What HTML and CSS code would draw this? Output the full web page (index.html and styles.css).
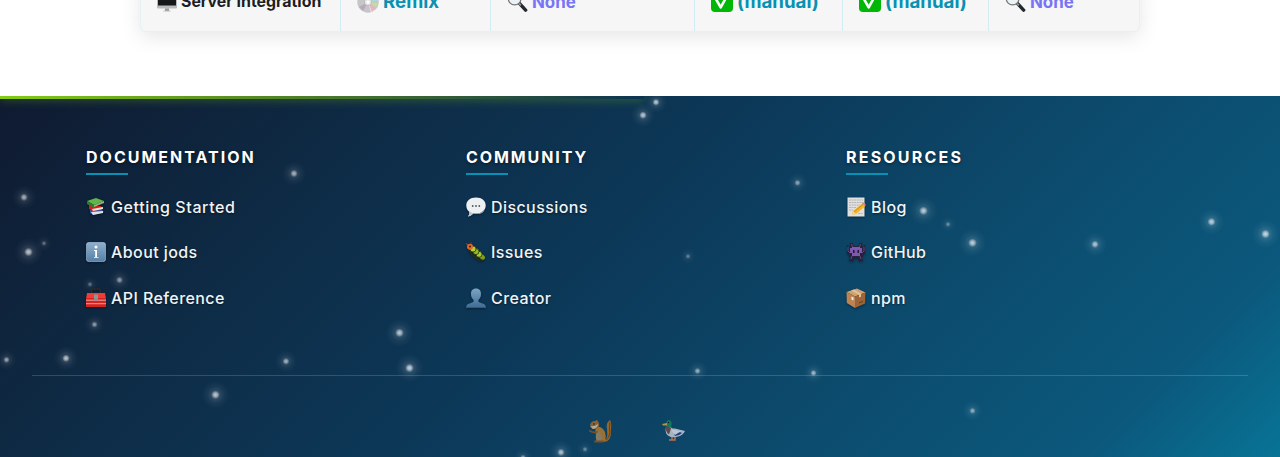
FILE: index.html
```html
<!DOCTYPE html>
<html lang="en">
<head>
<meta charset="utf-8">
<title>jods</title>
<link rel="stylesheet" href="styles.css">
</head>
<body>
<svg class="defs" width="0" height="0">
  <defs>
    <radialGradient id="glow"><stop offset="0" stop-color="#fff" stop-opacity=".95"/><stop offset=".15" stop-color="#fff" stop-opacity=".7"/><stop offset=".31" stop-color="#fff" stop-opacity=".16"/><stop offset=".6" stop-color="#fff" stop-opacity=".06"/><stop offset="1" stop-color="#fff" stop-opacity="0"/></radialGradient>
    <linearGradient id="blue" x2="0" y2="1"><stop stop-color="#8fb0cd"/><stop offset="1" stop-color="#5580a5"/></linearGradient>
    <linearGradient id="person" x2="0" y2="1"><stop stop-color="#7da4c6"/><stop offset="1" stop-color="#3f6c95"/></linearGradient>
    <symbol id="lens" viewBox="0 0 22 22"><path d="M13 12.500l6.500 7" stroke="#25282c" stroke-width="3.600" stroke-linecap="round"/><path d="M12.500 12.500l2 2" stroke="#999" stroke-width="2"/><circle cx="8" cy="7.500" r="6.600" fill="#edf3f5" stroke="#70757a" stroke-width="1.300"/></symbol>
    <symbol id="check" viewBox="0 0 22 22"><rect width="22" height="21" rx="4" fill="#00b607"/><path d="M5.500 9l4.200 7.300L16.500 4" fill="none" stroke="#fff" stroke-width="2.600" stroke-linecap="round" stroke-linejoin="round"/></symbol>
  </defs>
</svg>
<main class="main">
  <div class="row">
    <div class="cell cell-name"><svg class="icon" viewBox="0 0 20 20"><rect x="0" y="1" width="20" height="15.500" rx="1" fill="#b8babd"/><rect x="1" y="2" width="18" height="11.500" fill="#151719"/><path d="M8 16.500h4v2.500H8z" fill="#999"/><path d="M6.500 18.500h7v1h-7z" fill="#bbb"/></svg><span class="name">Server Integration</span></div>
    <div class="cell cell-remix"><svg class="icon icon-lg" viewBox="0 0 22 22"><circle cx="11" cy="11" r="10.700" fill="#c6c5c8"/><path d="M11 11L3 4l4-3zM11 11l3 10 4-2z" fill="#eee"/><path d="M11 11l10 1-2 5z" fill="#c4dd9c"/><path d="M11 11l8 6-4 4z" fill="#e8b2c9"/><path d="M11 11L2 16l4 4z" fill="#b9a8ba"/><path d="M11 11l9-6 1.500 5z" fill="#b3d6dd"/><circle cx="11" cy="11" r="3.600" fill="#e9e9e9" stroke="#aaa" stroke-width=".6"/><circle cx="11" cy="11" r="1.500" fill="#fff"/></svg><span class="yes">Remix</span></div>
    <div class="cell cell-wide"><svg class="icon icon-lens"><use href="#lens"/></svg><span class="none">None</span></div>
    <div class="cell cell-a"><svg class="icon icon-lg"><use href="#check"/></svg><span class="yes">(manual)</span></div>
    <div class="cell cell-b"><svg class="icon icon-lg"><use href="#check"/></svg><span class="yes">(manual)</span></div>
    <div class="cell cell-last"><svg class="icon icon-lens"><use href="#lens"/></svg><span class="none">None</span></div>
  </div>
</main>
<footer class="footer">
  <svg class="stars" viewBox="0 0 1280 361" fill="url(#glow)">
    <circle cx="656" cy="6.200" r="11" opacity=".8"/><circle cx="643" cy="19.200" r="12" opacity=".8"/>
    <circle cx="294" cy="77.500" r="12" opacity=".7"/><circle cx="24" cy="101.300" r="12" opacity=".7"/>
    <circle cx="28.500" cy="156" r="14" opacity=".8"/><circle cx="44" cy="147.300" r="8" opacity=".4"/>
    <circle cx="119.500" cy="184" r="11" opacity=".6"/><circle cx="90" cy="188.300" r="8" opacity=".4"/>
    <circle cx="94.500" cy="228.500" r="10" opacity=".6"/><circle cx="66" cy="262.300" r="12" opacity=".8"/>
    <circle cx="6.500" cy="263.800" r="10" opacity=".65"/><circle cx="286" cy="265.300" r="11" opacity=".7"/>
    <circle cx="399.500" cy="236.800" r="14" opacity=".8"/><circle cx="409.500" cy="272" r="14" opacity=".85"/>
    <circle cx="215.500" cy="298.800" r="14" opacity=".8"/><circle cx="797.500" cy="86.800" r="10" opacity=".6"/>
    <circle cx="688" cy="160.300" r="8" opacity=".4"/><circle cx="923.500" cy="114.800" r="14" opacity=".8"/>
    <circle cx="948" cy="128.300" r="8" opacity=".45"/><circle cx="972.500" cy="146.800" r="14" opacity=".8"/>
    <circle cx="1095" cy="148.300" r="12" opacity=".75"/><circle cx="1211.500" cy="125.800" r="13" opacity=".8"/>
    <circle cx="1265.500" cy="138" r="14" opacity=".85"/><circle cx="697.500" cy="275" r="10" opacity=".65"/>
    <circle cx="813.500" cy="277" r="10" opacity=".7"/><circle cx="972.500" cy="314.800" r="10" opacity=".6"/>
    <circle cx="561" cy="356.300" r="12" opacity=".75"/><circle cx="585" cy="353.300" r="8" opacity=".45"/><circle cx="523" cy="361.500" r="9" opacity=".6"/>
  </svg>
  <div class="streak"></div>
  <div class="columns">
    <section class="column">
      <h2 class="title">Documentation</h2>
      <a class="link link-wide"><svg class="emoji" viewBox="0 0 20 20"><path d="M4 13l11-1 3 3-11 3-3-2z" fill="#35559b"/><path d="M5 15l12-1v2l-10 2z" fill="#dce4e9"/><path d="M3 8l12 1 2 3-10 2-4-2z" fill="#cf211f"/><path d="M6 12l11-2v2L7 14z" fill="#f1dfd5"/><path d="M1 4l9-3 8 3-10 4z" fill="#62b44d"/><path d="M1 4v3l7 4V8z" fill="#327b2c"/><path d="M8 8l10-4v2L8 10z" fill="#8fb77d"/></svg>Getting Started</a>
      <a class="link"><svg class="emoji" viewBox="0 0 20 20"><rect x=".3" y=".3" width="19.400" height="19.400" rx="3" fill="url(#blue)" stroke="#a8c5dc" stroke-width=".6"/><circle cx="10" cy="5" r="1.500" fill="#fff"/><path d="M8 8h3v7h1.500v.8H8V15h1.200V9H8z" fill="#fff"/></svg>About jods</a>
      <a class="link"><svg class="emoji" viewBox="0 0 20 20"><path d="M5.500 5V2Q5.500 1 7 1h6q1.500 0 1.500 1v3" fill="none" stroke="#30282a" stroke-width="1.700"/><path d="M1 5h18l1 6H0z" fill="#ee3e37"/><path d="M0 10h20v9H0z" fill="#d9221e"/><path d="M0 12.200h20M0 15.700h20" stroke="#d5adad" stroke-width="1"/><path d="M8 6.500h4v5H8z" fill="#899"/></svg>API Reference</a>
    </section>
    <section class="column">
      <h2 class="title title-tight">Community</h2>
      <a class="link"><svg class="emoji" viewBox="0 0 20 20"><path d="M10 .5c6 0 9.700 3.500 9.700 8s-4 8-9.700 8c-1 0-2-.1-2.500-.3Q5.500 19 2 19.500q2-2 1.500-4.500C1.500 13.500.3 11.500.3 8.500.3 4 4 .5 10 .5z" fill="#edf0f2"/><path d="M3 14q3 2.500 7 2.500 6 0 9-4-3 6-11.500 4Q5 19 2 19.500q2-2 1-5.500z" fill="#bfc5ca"/><circle cx="6.700" cy="9" r=".9" fill="#555"/><circle cx="10" cy="9" r=".9" fill="#555"/><circle cx="13.300" cy="9" r=".9" fill="#555"/></svg>Discussions</a>
      <a class="link"><svg class="emoji" viewBox="0 0 20 20"><path d="M3 8l3 5 3 2 4 3 5 0" fill="none" stroke="#302b16" stroke-width="1.500"/><ellipse cx="16" cy="14.800" rx="3.300" ry="2.300" transform="rotate(35 16 14.800)" fill="#7d9e1d"/><circle cx="13" cy="12.300" r="3" fill="#a9cc35" stroke="#33430e" stroke-width=".9"/><circle cx="10" cy="9.600" r="3" fill="#96b82a" stroke="#33430e" stroke-width=".9"/><circle cx="7" cy="7" r="3" fill="#b3d13e" stroke="#33430e" stroke-width=".9"/><circle cx="4" cy="4.800" r="3" fill="#e0682a"/><circle cx="4" cy="4.500" r="1" fill="#40200b"/><path d="M2 3L0 1.500m5 0V.5" stroke="#ac531e"/></svg>Issues</a>
      <a class="link"><svg class="emoji" viewBox="0 0 20 20"><path d="M10 .4c3.500 0 5 2.300 5 5.500 0 2.800-1 4.600-2.500 5.800v2c1 1.300 6.500 1.700 7 4l.5 2H0l.5-2c.5-2.300 6-2.700 7-4v-2C6 10.500 5 8.700 5 5.900 5 2.700 6.500.4 10 .4z" fill="url(#person)"/></svg>Creator</a>
    </section>
    <section class="column">
      <h2 class="title title-loose">Resources</h2>
      <a class="link"><svg class="emoji" viewBox="0 0 20 20"><path d="M1.500.5h17v19h-17z" fill="#dfe0df"/><path d="M3 3h14M3 5.500h14M3 8h11M3 10.500h7M3 13h4M12 16.500h5" stroke="#aaa" stroke-width=".8" stroke-dasharray="2 .6"/><path d="M6 18l1-4L16 6.500l3 3L10 17z" fill="#f5b528"/><path d="M16 6.500l1-1q2-.5 2.800 2.500L19 9.500z" fill="#e77d8a"/><path d="M7 14l3 3-4 1z" fill="#efd4a6"/><path d="M8 15l9-7.500" stroke="#c98619" stroke-width=".8"/></svg>Blog</a>
      <a class="link"><svg class="emoji" viewBox="0 0 20 20"><path d="M4 1h3v3h6V1h3v3h1v3h1V3h1v9h-2v3h-2v2h2v2h-5v-3H8v3H3v-2h2v-2H3v-3H1V3h1v4h1V4h1z" fill="#27213b"/><path d="M6 5h8v1h2v5h-2v3H6v-3H4V6h2z" fill="#7d59b0"/><path d="M7 8h1.500v3H7zm4.500 0H13v3h-1.500z" fill="#24182f"/><path d="M2 5v4l2 2M18 5v4l-2 2M5.500 2l1 3m8-3l-1 3M6 14l-1 3m9-3l1 3" fill="none" stroke="#6c5193" stroke-width=".8"/></svg>GitHub</a>
      <a class="link"><svg class="emoji" viewBox="0 0 20 20"><path d="M.5 4L11 .5l8.500 4L9 8.500z" fill="#d2a16d"/><path d="M.5 4L9 8.500V20L.8 15z" fill="#bb8452"/><path d="M9 8.500l10.500-4-.5 11L9 20z" fill="#9b6539"/><path d="M5 2.500L8 1.500l7 4.300v3l-2 .8V6.800z" fill="#dfc29c"/><path d="M5.500 8.500l2 1v3l-2-1z" fill="#eee"/><path d="M13 15l4-1.700" stroke="#674022"/></svg>npm</a>
    </section>
  </div>
  <div class="mascots">
    <svg class="mascot" viewBox="0 0 24 24"><path d="M15 21c6-1 4-7 4-11-1-4 0-7 3-9 2 3 1 8 1 12 0 7-3 10-8 10z" fill="#b8701f"/><path d="M22 3q-1 6 0 11-1 5-4 7" fill="none" stroke="#77410f"/><path d="M8 8q6-1 9 5 2 8-2 10H8q-1-2 2-3-4-6-2-12z" fill="#bd7d2b"/><path d="M10 12q5 4 3 10H9q-3-5 1-10z" fill="#a08a68"/><path d="M2 6q1-4 5-4l2-1 2 3q1 4-3 6H4z" fill="#a66a2d"/><path d="M2 7q4 1 8-2 0 4-5 5z" fill="#d6c7ac"/><circle cx="6" cy="5" r=".8" fill="#211"/><path d="M9 13q-4 1-7-1M7 22.500h8" fill="none" stroke="#8e571c" stroke-width="1.800" stroke-linecap="round"/></svg>
    <svg class="mascot" viewBox="0 0 24 24"><path d="M11 17v4H8m6-4v4h-3" fill="none" stroke="#e27e45" stroke-width="1.500"/><path d="M5 8h5q0 1.500 4 1.500l10 2.500q-2 5-9 6-8 1-10-4-1-3 0-6z" fill="#cdd0d8"/><path d="M5 7.500h4l1 2-2 6q-4-3-3-8z" fill="#74484d"/><path d="M13 15l6-2 2 1q-3 3-7 3z" fill="#30438b"/><path d="M10 10.500l10 1.500-6 4z" fill="#e7e8eb"/><path d="M6 8q-2-7 2-7 4 1 2 7z" fill="#16875a"/><path d="M6 4L1 5l1 1.500h4z" fill="#d5ad46"/><circle cx="7.500" cy="3.500" r=".7" fill="#111"/></svg>
  </div>
</footer>
</body>
</html>
```
FILE: styles.css
```css
* { box-sizing: border-box; }
body { margin: 0; height: 457px; overflow: hidden; background: #fff; font-family: Inter, "Liberation Sans", sans-serif; }
.defs { display: block; height: 0; }
.main { height: 96px; overflow: hidden; }
.row {
  display: flex; width: 1000px; height: 61px; margin: -29px auto 0;
  background: #f6f6f6; border: 1px solid #e2f2f5; border-radius: 6px;
  box-shadow: 0 5px 20px rgba(0, 0, 0, .1);
}
.cell { display: flex; align-items: center; gap: 4px; padding-left: 16px; border-right: 1px solid #d3ecf1; white-space: nowrap; font-weight: 700; }
.cell:last-child { border-right: 0; }
.cell-name { width: 200px; }
.cell-remix { width: 150px; }
.cell-wide { width: 204px; }
.cell-a { width: 148px; }
.cell-b { width: 146px; }
.cell-last { flex: 1; }
.icon { width: 20px; height: 20px; flex: none; }
.icon-lg { width: 22px; height: 22px; }
.icon-lens { width: 21px; height: 22px; }
.name { font-size: 15.9px; color: #1c1e21; }
.yes { font-size: 18.7px; color: #0891b2; }
.none { font-size: 16.9px; color: #7775f5; }
.footer {
  position: relative; height: 361px; padding: 0 32px; overflow: hidden;
  background: linear-gradient(135deg, #0f1a30 0%, #0e2b45 24%, #0c3858 46%, #0c4b6d 69%, #0b587c 88%, #087496 100%);
}
.stars { position: absolute; inset: 0; width: 1280px; height: 361px; }
.streak {
  position: absolute; top: 0; left: 0; width: 644px; height: 3px;
  background: linear-gradient(90deg, #84cc16, rgba(132, 204, 22, 0));
  box-shadow: 0 0 10px rgba(132, 204, 22, .65);
}
.columns {
  position: relative; display: grid; grid-template-columns: repeat(3, 380px);
  height: 280px; padding: 50px 0 0 54px; border-bottom: 1px solid rgba(255, 255, 255, .16);
}
.column { display: flex; flex-direction: column; align-items: flex-start; }
.title {
  margin: 0 0 9px; height: 29px; line-height: 23px; font-size: 16px; font-weight: 700;
  letter-spacing: 2px; text-transform: uppercase; color: #fff; text-shadow: 0 1px 3px rgba(0, 0, 0, .5);
}
.title-tight { letter-spacing: 1.9px; }
.title-loose { letter-spacing: 2.2px; }
.title::after { content: ""; display: block; width: 42px; height: 2px; margin-top: 4px; background: #0891b2; }
.link {
  display: flex; align-items: center; gap: 5px; height: 45.5px; color: #f0f4f6;
  font-size: 16px; font-weight: 500; letter-spacing: .42px; text-shadow: 0 1px 2px rgba(0, 0, 0, .5);
}
.link-wide { letter-spacing: .59px; }
.emoji { width: 20px; height: 20px; filter: drop-shadow(0 1px 1px rgba(0, 0, 0, .4)); }
.mascots { position: relative; display: flex; gap: 49px; padding: 43px 0 0 556px; opacity: .8; }
.mascot { width: 24px; height: 24px; }
```
